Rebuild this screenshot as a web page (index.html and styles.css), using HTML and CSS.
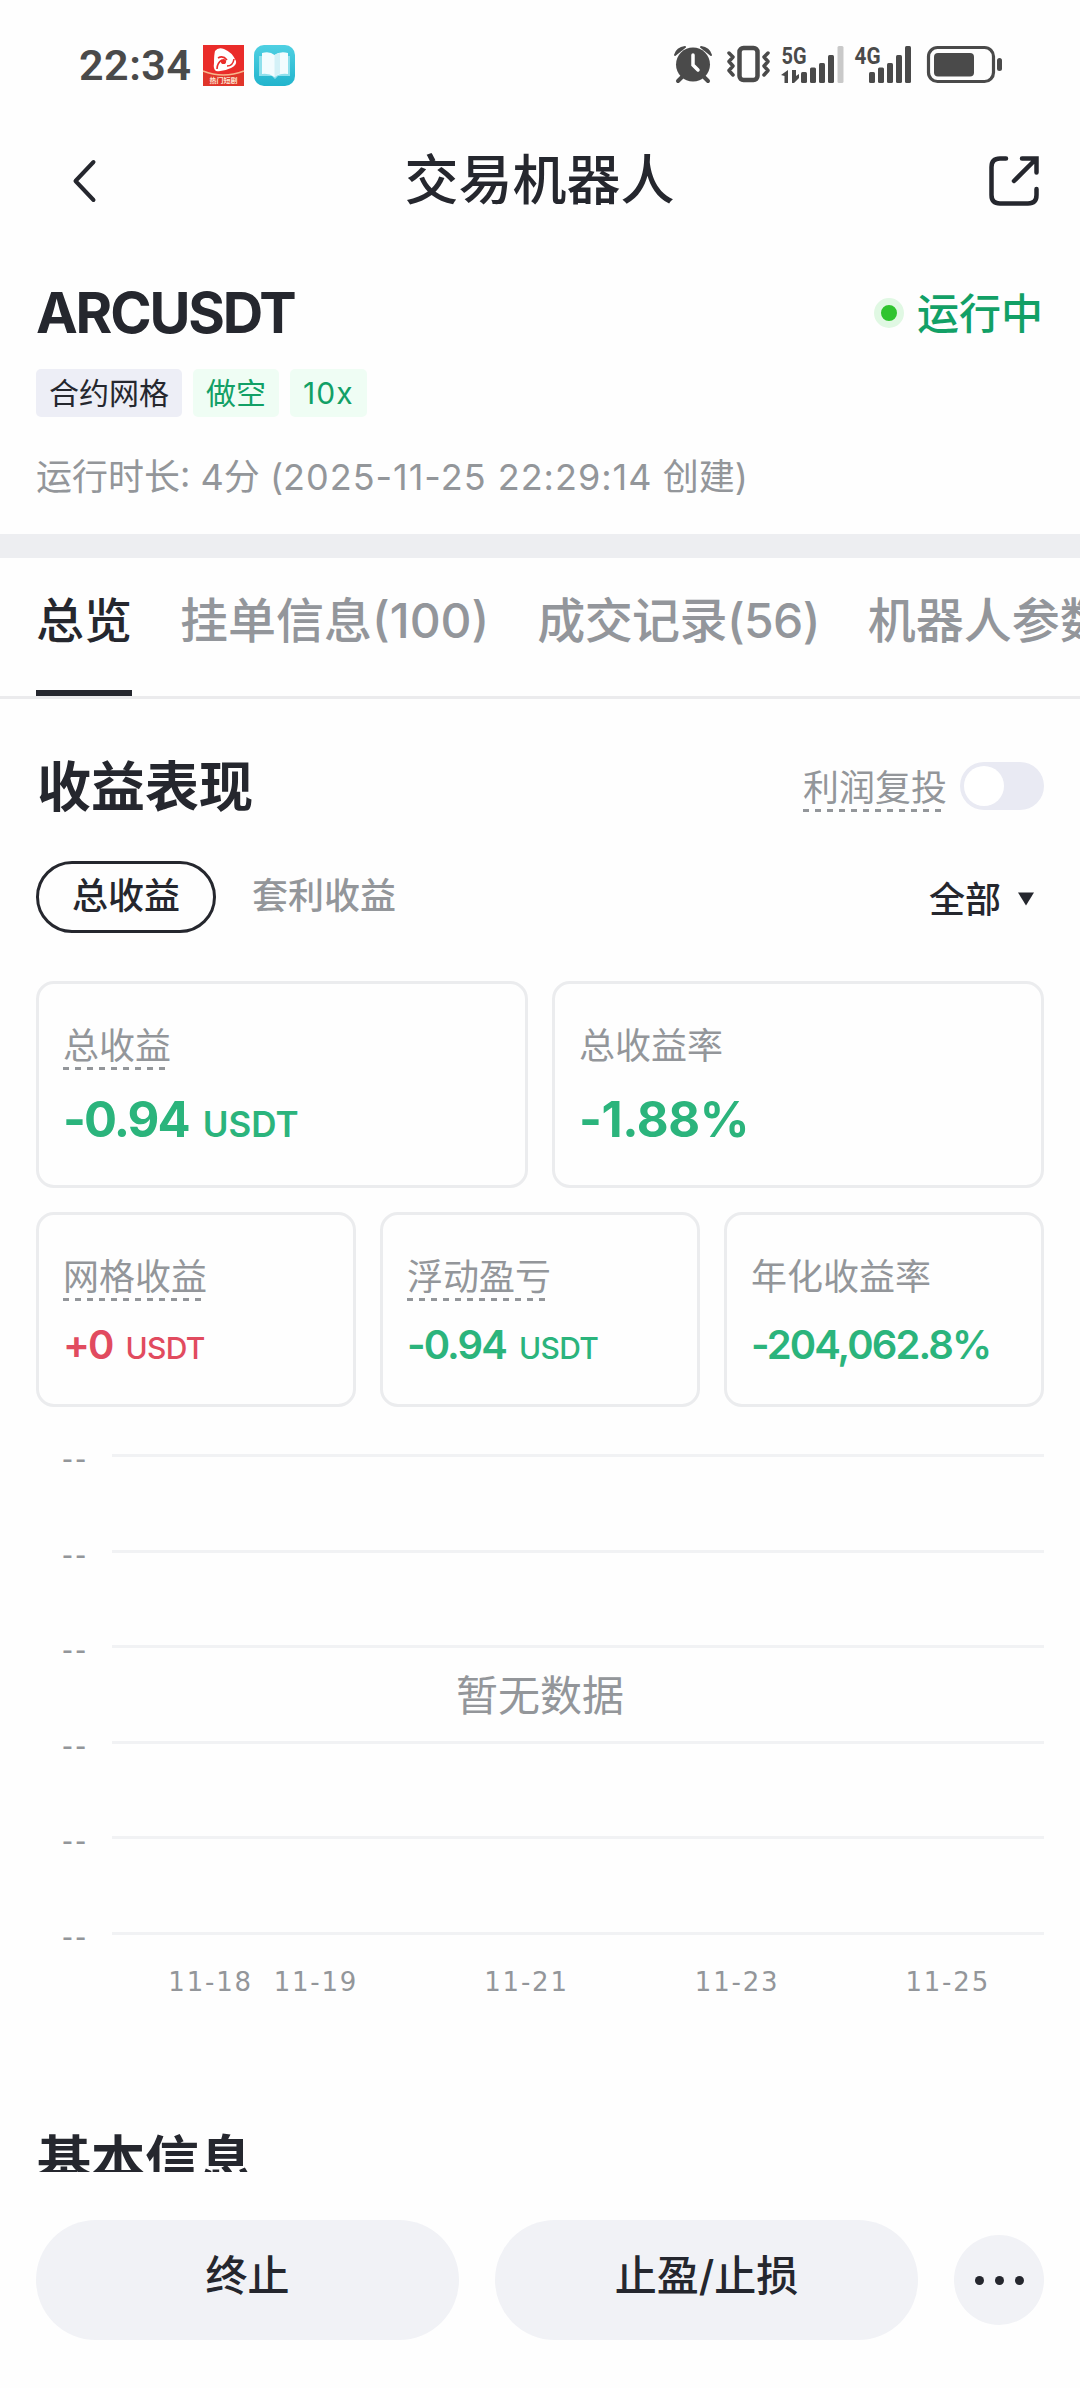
FILE: index.html
```html
<!DOCTYPE html>
<html lang="zh-CN">
<head>
<meta charset="utf-8">
<title>交易机器人</title>
<link rel="stylesheet" href="styles.css">
</head>
<body>
<div class="screen">
  <div class="statusbar">
    <span class="clock">22:34</span>
    <svg class="app-icon" width="41" height="41" viewBox="0 0 41 41">
      <rect width="41" height="41" fill="#ea2c2a"/>
      <path d="M12 6 Q15 2 21 4 Q29 7 33 16 Q34 20 28 23 Q20 27 13 26 Q10 24 11 18 Q11 10 12 6 Z" fill="#fff"/>
      <path d="M15 13 Q20 10 24 15 M31 14 Q30 21 24 21 M14 24 Q14 18 19 15" fill="none" stroke="#ea2c2a" stroke-width="1.6"/>
      <circle cx="20.500" cy="16.500" r="2.600" fill="#ea2c2a"/>
      <path d="M0 26 Q20 34 41 26 L41 41 L0 41 Z" fill="#e0352a"/>
      <path d="M0 26 Q20 34 41 26" fill="none" stroke="#f7b78c" stroke-width="1.500"/>
      <text x="20.500" y="38" text-anchor="middle" font-size="7" font-weight="700" fill="#fde3cf">热门短剧</text>
    </svg>
    <svg class="app-icon book" width="41" height="41" viewBox="0 0 41 41">
      <defs><linearGradient id="sky" x1="0" y1="0" x2="0" y2="1"><stop offset="0" stop-color="#4fd0e2"/><stop offset="1" stop-color="#22b4cd"/></linearGradient></defs>
      <rect width="41" height="41" rx="10" fill="url(#sky)"/>
      <path d="M5 11 H36 V31 H24 L21 34 L18 31 H5 Z" fill="#8fe0ec"/>
      <path d="M8 8 Q16 6 20.500 10 Q26 6 34 8 V29 Q26 28 20.500 32 Q15 28 8 29 Z" fill="#f3fcfe"/>
      <path d="M20.500 10 V32 Q24 29 26 28.500 V8 Q23 8 20.500 10" fill="#d3f1f7"/>
    </svg>
    <svg class="indicators" width="345" height="40" viewBox="0 0 345 40">
      <g fill="#4a4a4a" stroke="none">
        <circle cx="19" cy="19.500" r="17"/>
        <path d="M1 10 Q3 3 11 2 Z M27 2 Q35 3 37 10 Z" stroke="#4a4a4a" stroke-width="2" stroke-linejoin="round"/>
      </g>
      <path d="M8 32 L4 36 M30 32 L34 36" stroke="#4a4a4a" stroke-width="4" stroke-linecap="round"/>
      <path d="M19 10 V20 L24 25" fill="none" stroke="#fff" stroke-width="3.500" stroke-linecap="round"/>
      <rect x="65.500" y="3" width="18" height="32" rx="4" fill="none" stroke="#4a4a4a" stroke-width="4.500"/>
      <path d="M55 8 L59 12 L55 16.500 L59 21 L55 25.500 L59 30 M94 8 L90 12 L94 16.500 L90 21 L94 25.500 L90 30" fill="none" stroke="#4a4a4a" stroke-width="3.500" stroke-linecap="round" stroke-linejoin="round"/>
      <text x="107.500" y="19" font-size="24" textLength="25" lengthAdjust="spacingAndGlyphs" class="net">5G</text>
      <path d="M107 30 L114 25 V38 H110.500 V31 Z M118 25 H122 V31 L125 29 V33 L120 38 H118 Z" fill="#4a4a4a"/>
      <g fill="#4a4a4a">
        <rect x="127" y="27" width="6" height="11" rx="1.500"/><rect x="136" y="22.500" width="6" height="15.500" rx="1.500"/><rect x="145" y="18" width="6" height="20" rx="1.500"/><rect x="154" y="10" width="6" height="28" rx="1.500"/>
        <rect x="163.500" y="1" width="6" height="37" rx="1.500" fill="#c9c9c9"/>
        <rect x="195" y="27" width="6" height="11" rx="1.500"/><rect x="204" y="22.500" width="6" height="15.500" rx="1.500"/><rect x="213" y="18" width="6" height="20" rx="1.500"/><rect x="222" y="10" width="6" height="28" rx="1.500"/><rect x="231" y="1" width="6" height="37" rx="1.500"/>
      </g>
      <text x="180.500" y="19" font-size="24" textLength="26" lengthAdjust="spacingAndGlyphs" class="net">4G</text>
      <rect x="254.500" y="2.500" width="65" height="34" rx="9" fill="none" stroke="#4a4a4a" stroke-width="3.200"/>
      <rect x="260" y="8" width="40" height="23.500" rx="4" fill="#4a4a4a"/>
      <rect x="323" y="13" width="5" height="13" rx="2.500" fill="#4a4a4a"/>
    </svg>
  </div>

  <div class="navbar">
    <svg width="24" height="44" viewBox="0 0 24 44"><path d="M21.500 3 L3.500 22 L21.500 41" fill="none" stroke="#25272e" stroke-width="4" stroke-linecap="round" stroke-linejoin="round"/></svg>
    <h1>交易机器人</h1>
    <svg width="50" height="50" viewBox="0 0 50 50"><path d="M17 2.500 H11 Q2.500 2.500 2.500 11 V39 Q2.500 47.500 11 47.500 H39 Q47.500 47.500 47.500 39 V33 M33 2.500 H47.500 V16.500 M47 3 L25 25" fill="none" stroke="#25272e" stroke-width="4.500" stroke-linecap="round"/></svg>
  </div>

  <div class="summary">
    <div class="pair-row">
      <span class="pair">ARCUSDT</span>
      <span class="state"><i class="dot"></i><span class="state-text">运行中</span></span>
    </div>
    <div class="tags"><span class="tag">合约网格</span><span class="tag green">做空</span><span class="tag green num">10x</span></div>
    <div class="runtime">运行时长: 4分 (<span class="stamp">2025-11-25 22:29:14</span> 创建)</div>
  </div>

  <div class="tabs">
    <span class="tab active">总览</span><span class="tab t2">挂单信息(100)</span><span class="tab t3">成交记录(56)</span><span class="tab">机器人参数</span>
  </div>

  <div class="content">
    <div class="section-head">
      <h2>收益表现</h2>
      <div class="reinvest"><span class="hint">利润复投</span><span class="toggle"><i></i></span></div>
    </div>
    <div class="filters">
      <span class="pill">总收益</span><span class="plain">套利收益</span>
      <span class="range">全部<svg width="18" height="14" viewBox="0 0 18 14"><path d="M1 0.500 H17 L9 13.500 Z" fill="#25272e"/></svg></span>
    </div>
    <div class="cards big">
      <div class="card"><span class="hint">总收益</span><div class="val"><b class="v1">-0.94</b><small>USDT</small></div></div>
      <div class="card"><span class="label">总收益率</span><div class="val"><b class="v2">-1.88%</b></div></div>
    </div>
    <div class="cards small">
      <div class="card"><span class="hint">网格收益</span><div class="val red"><b>+0</b><small>USDT</small></div></div>
      <div class="card"><span class="hint">浮动盈亏</span><div class="val"><b class="v3">-0.94</b><small>USDT</small></div></div>
      <div class="card"><span class="label">年化收益率</span><div class="val"><b class="v4">-204,062.8%</b></div></div>
    </div>
    <div class="chart">
      <div class="line first"><span>--</span></div>
      <div class="line"><span>--</span></div>
      <div class="line"><span>--</span></div>
      <div class="line"><span>--</span></div>
      <div class="line"><span>--</span></div>
      <div class="line"><span>--</span></div>
      <div class="empty">暂无数据</div>
      <div class="dates"><span>11-18</span><span>11-19</span><span></span><span>11-21</span><span></span><span>11-23</span><span></span><span>11-25</span></div>
    </div>
    <h2 class="next">基本信息</h2>
  </div>

  <div class="actions">
    <span class="btn">终止</span>
    <span class="btn">止盈/止损</span>
    <span class="more"><i></i><i></i><i></i></span>
  </div>
</div>
</body>
</html>
```
FILE: styles.css
```css
* { box-sizing: border-box; margin: 0; padding: 0; }
body { background: #fefefe; color: #25272e; font-family: Inter, "Noto Sans CJK SC", sans-serif; }
i { font-style: normal; }
svg { display: block; flex: none; overflow: visible; }
span, b, small, h1, h2 { white-space: nowrap; }
.screen { width: 1080px; height: 2388px; overflow: hidden; display: flex; flex-direction: column; }

.statusbar { height: 130px; display: flex; align-items: flex-start; padding: 45px 0 0 79px; color: #4a4a4a; }
.clock { width: 124px; font: 600 43px/41px Roboto, sans-serif; letter-spacing: 0.5px; }
.book { margin-left: 10px; }
.indicators { margin-left: 379px; }
.net { font-family: Roboto, sans-serif; font-weight: 700; fill: #4a4a4a; }

.navbar { height: 100px; padding: 2px 41px 0 72px; display: flex; align-items: center; justify-content: space-between; }
.navbar h1 { font-size: 54px; font-weight: 500; line-height: 80px; padding-right: 6px; }

.summary { height: 328px; border-bottom: 24px solid #edeef1; padding: 53px 36px 0; }
.pair-row { height: 60px; display: flex; align-items: center; justify-content: space-between; }
.pair { font-size: 56px; font-weight: 700; letter-spacing: -2.2px; }
.state { display: flex; align-items: center; font-size: 42px; font-weight: 500; color: #12a066; }
.state-text { padding-bottom: 6px; margin-right: 1px; }
.dot { width: 30px; height: 30px; margin-right: 13px; border-radius: 50%; border: 7px solid #e0f8e3; background: #2fc42f; }
.tags { margin-top: 26px; display: flex; gap: 11px; }
.tag { height: 48px; line-height: 48px; padding: 0 13px; border-radius: 5px; background: #edeef6; font-size: 30px; }
.tag.green { background: #effdf4; color: #12a066; }
.tag.num { letter-spacing: 1px; }
.runtime { margin-top: 34px; font-size: 36px; line-height: 52px; color: #93969a; white-space: nowrap; }
.stamp { letter-spacing: 1px; }

.tabs { height: 141px; border-bottom: 3px solid #ebebed; padding-left: 36px; display: flex; gap: 48px; overflow: hidden; }
.tab { flex: none; font-size: 48px; font-weight: 500; line-height: 126px; color: #93969b; }
.tab.active { color: #25272e; border-bottom: 6px solid #25272e; }
.t3 { letter-spacing: -0.6px; }

.content { height: 1473px; padding: 0 36px; overflow: hidden; }
.section-head { height: 162px; padding-top: 47px; display: flex; justify-content: space-between; align-items: flex-start; }
h2 { font-size: 54px; font-weight: 700; line-height: 80px; padding: 2px 0 0 1px; }
.reinvest { display: flex; gap: 13px; padding-top: 16px; }
.hint, .label { display: inline-block; font-size: 36px; line-height: 50px; color: #93969a; }
.hint { background: repeating-linear-gradient(90deg, #93969a 0 6px, transparent 6px 12px) 0 100% / 100% 3px no-repeat; }
.reinvest .hint { height: 50px; line-height: 52px; }
.toggle { width: 84px; height: 48px; border-radius: 24px; background: #e9eaf3; padding: 4px; }
.toggle i { display: block; width: 40px; height: 40px; border-radius: 50%; background: #fff; }
.filters { height: 72px; display: flex; align-items: center; font-size: 36px; }
.pill { height: 72px; width: 180px; border: 3px solid #25272e; border-radius: 36px; text-align: center; line-height: 64px; font-weight: 500; }
.plain { margin-left: 36px; color: #93969a; font-weight: 500; line-height: 64px; margin-bottom: 2px; }
.range { margin-left: auto; margin-right: 9px; display: flex; align-items: center; gap: 16px; font-weight: 500; }
.range svg { margin-top: 4px; }
.cards { display: flex; gap: 24px; }
.card { flex: 1; border: 3px solid #ebecee; border-radius: 18px; padding: 37px 24px 0; }
.big { margin-top: 48px; height: 207px; }
.small { margin-top: 24px; height: 195px; }
.card .hint, .card .label { display: block; width: max-content; height: 49px; }
.val { color: #2bb47c; display: flex; align-items: baseline; }
.val.red { color: #e14b5f; }
.big .val { margin-top: 20px; gap: 14px; line-height: 60px; }
.big b { font-size: 49px; font-weight: 700; }
.big small { font-size: 35px; font-weight: 600; }
.v1 { letter-spacing: -1.9px; }
.v2 { letter-spacing: -0.4px; }
.small .val { margin-top: 20px; gap: 13px; line-height: 48px; }
.small b { font-size: 40px; font-weight: 600; letter-spacing: -1.9px; }
.small small { font-size: 30px; font-weight: 500; letter-spacing: -0.7px; }

.chart { position: relative; margin-top: 47px; height: 634px; padding-left: 76px; }
.line { height: 95.6px; border-top: 3px solid #f1f2f4; }
.line span { display: block; margin-left: -50px; width: 30px; font: 30px/4px "DejaVu Sans", sans-serif; letter-spacing: 2.5px; color: #93969a; }
.empty { position: absolute; left: 0; right: 0; top: 211px; text-align: center; font-size: 42px; line-height: 62px; color: #93969a; }
.dates { position: absolute; left: 122px; top: 513px; display: flex; font: 26px/30px "DejaVu Sans", sans-serif; letter-spacing: 1.8px; color: #93969a; }
.dates span { width: 105.300px; text-align: center; }
.next { margin-top: 32px; }

.actions { height: 216px; padding: 48px 36px 0; display: flex; gap: 36px; background: #fefefe; }
.btn { width: 423px; height: 120px; border-radius: 60px; background: #f1f2f6; text-align: center; font-size: 42px; font-weight: 500; line-height: 112px; }
.more { width: 90px; height: 90px; margin-top: 15px; border-radius: 50%; background: #f1f2f6; display: flex; align-items: center; justify-content: center; gap: 11px; }
.more i { width: 9px; height: 9px; border-radius: 50%; background: #25272e; }
```
